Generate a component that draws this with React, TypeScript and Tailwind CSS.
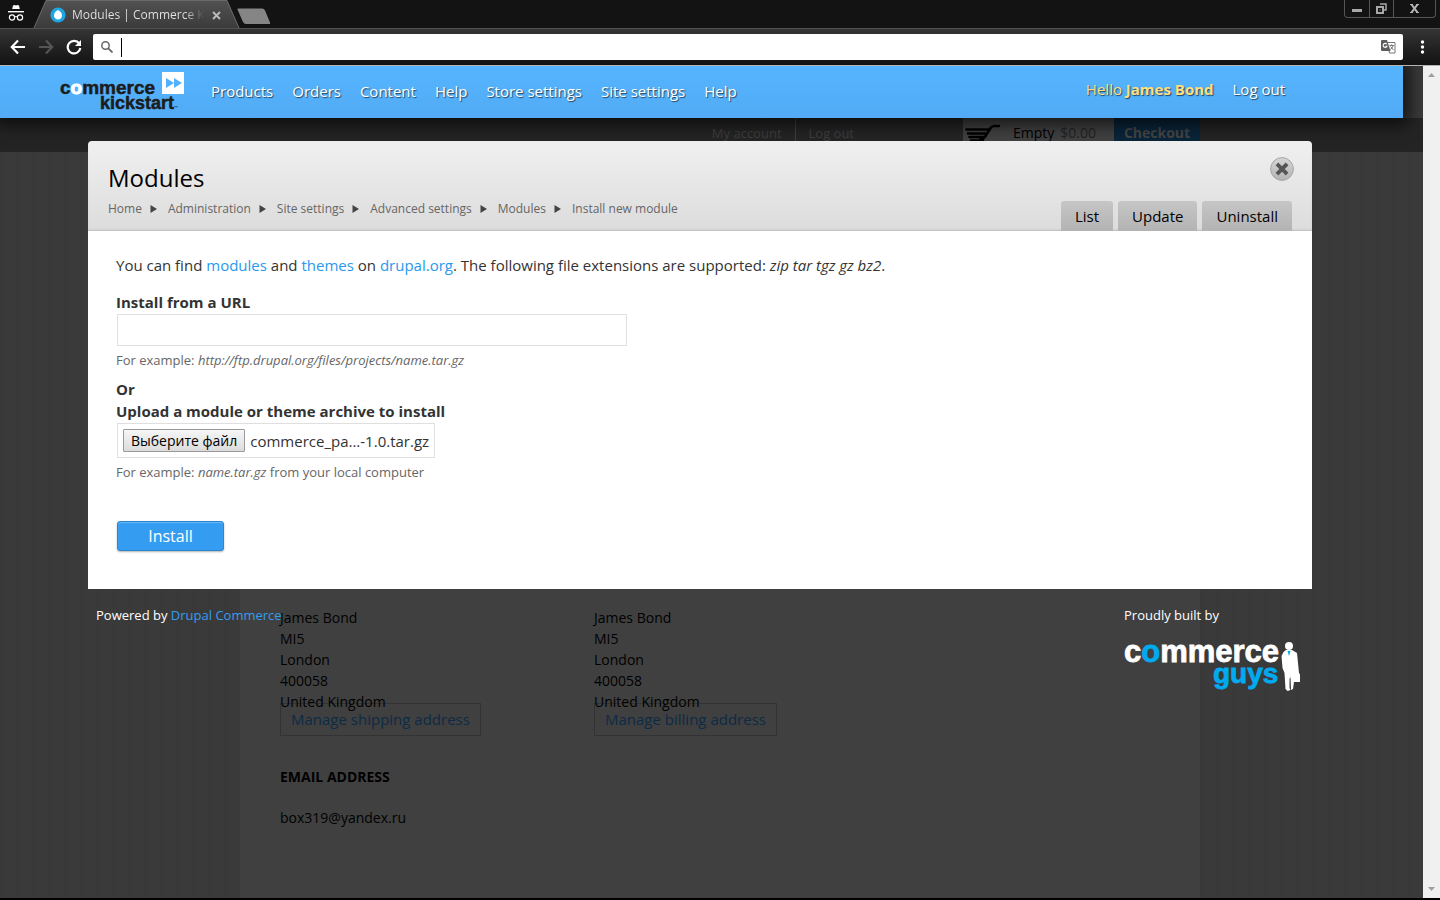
import { useRef } from 'react'

interface LinkItem {
  label: string
  href: string
}

const adminLinks: LinkItem[] = [
  { label: 'Products', href: '#products' },
  { label: 'Orders', href: '#orders' },
  { label: 'Content', href: '#content' },
  { label: 'Help', href: '#help' },
  { label: 'Store settings', href: '#store-settings' },
  { label: 'Site settings', href: '#site-settings' },
  { label: 'Help', href: '#support' },
]

const breadcrumbs: LinkItem[] = [
  { label: 'Home', href: '#home' },
  { label: 'Administration', href: '#admin' },
  { label: 'Site settings', href: '#admin-site' },
  { label: 'Advanced settings', href: '#admin-advanced' },
  { label: 'Modules', href: '#admin-modules' },
  { label: 'Install new module', href: '#admin-install' },
]

const tabs: LinkItem[] = [
  { label: 'List', href: '#list' },
  { label: 'Update', href: '#update' },
  { label: 'Uninstall', href: '#uninstall' },
]

const address = ['James Bond', 'MI5', 'London', '400058', 'United Kingdom']

function TabStrip() {
  return (
    <div className="relative flex h-7 shrink-0 justify-between bg-[#131313]">
      <div className="flex">
        <svg className="ml-2 mt-1 h-[18px] w-4" viewBox="0 0 16 18" fill="none">
          <path d="M4.2 5 5 1.4 6.6 1l1.4.5L9.4 1l1.6.4.8 3.6z" fill="#fff" />
          <path d="M0 7h16v1.4H0z" fill="#fff" />
          <circle cx="4" cy="13.5" r="2.6" stroke="#fff" strokeWidth="1.2" />
          <circle cx="12" cy="13.5" r="2.6" stroke="#fff" strokeWidth="1.2" />
          <path d="M6.5 13q1.5-1 3 0" stroke="#fff" />
        </svg>
        <div className="relative ml-2 flex h-7 w-[208px] items-center">
          <svg
            className="absolute inset-0 h-full w-full"
            viewBox="0 0 208 28"
            preserveAspectRatio="none"
          >
            <defs>
              <linearGradient id="tab" x1="0" y1="0" x2="0" y2="1">
                <stop offset="0" stopColor="#525252" />
                <stop offset="1" stopColor="#3b3b3b" />
              </linearGradient>
            </defs>
            <path d="M2 28 14 0h181l12 28z" fill="url(#tab)" />
            <path d="M2 28 14 .5h181L207 28" fill="none" stroke="#6a6a6a" />
          </svg>
          <svg className="relative ml-[18px] mt-[2px] h-4 w-4" viewBox="0 0 16 16">
            <circle cx="8" cy="8" r="7.6" fill="#1fa5e0" />
            <path
              d="M8 3c2.400 1.200 4 3 4 5.400A4 4 0 0 1 8 12.600 4 4 0 0 1 4 8.400C4 6 5.600 4.200 8 3z"
              fill="#fff"
            />
          </svg>
          <span className="relative ml-[6px] mt-[2px] w-[132px] overflow-hidden whitespace-nowrap bg-linear-to-r from-[#e6e6e6] from-85% to-transparent bg-clip-text text-xs text-transparent">
            Modules | Commerce Kickstart
          </span>
          <button
            type="button"
            aria-label="Close tab"
            className="relative ml-2 mt-[2px]"
          >
            <svg className="h-[9px] w-[9px]" viewBox="0 0 9 9">
              <path d="m1 1 7 7M8 1 1 8" stroke="#b9b9b9" strokeWidth="2" />
            </svg>
          </button>
        </div>
        <button type="button" aria-label="New tab" className="-ml-1 flex h-7 items-center pt-1">
          <svg className="h-[17px] w-[35px]" viewBox="0 0 35 17">
            <path
              d="M1.500 1.500Q1 .5 2.500.5H26q2 0 3 2l5 12q.5 1.500-1 1.500H10q-2 0-3-2z"
              fill="#858585"
            />
          </svg>
        </button>
      </div>
      <div className="mr-1 flex h-[18px] rounded-b border border-t-0 border-[#555]">
        <button
          type="button"
          aria-label="Minimize"
          className="flex w-6 items-center justify-center"
        >
          <span className="mt-1 h-[3px] w-[10px] bg-[#a8a8a8]" />
        </button>
        <button
          type="button"
          aria-label="Restore"
          className="flex w-[25px] items-center justify-center border-x border-[#555]"
        >
          <svg className="h-[11px] w-[11px]" viewBox="0 0 11 11" fill="none">
            <path d="M4 1h6v6H8" stroke="#a8a8a8" strokeWidth="1.500" />
            <path d="M1 4h6v6H1z" stroke="#a8a8a8" strokeWidth="2" />
            <path d="M3.500 6.500h1v1h-1z" fill="#a8a8a8" />
          </svg>
        </button>
        <button
          type="button"
          aria-label="Close"
          className="flex w-[41px] items-center justify-center"
        >
          <svg className="h-[9px] w-[9px]" viewBox="0 0 9 9">
            <path
              d="M0 .5h3M6 .5h3M0 8.500h3M6 8.500h3"
              stroke="#b5b5b5"
            />
            <path d="m1.500.5 6 8m0-8-6 8" stroke="#b5b5b5" strokeWidth="2" />
          </svg>
        </button>
      </div>
    </div>
  )
}

function Toolbar() {
  return (
    <div className="flex h-[38px] shrink-0 items-center border-b border-t border-b-[#b5b5b5] border-t-[#505050] bg-linear-to-b from-[#353535] to-[#121212]">
      <button type="button" aria-label="Back" className="ml-[10px]">
        <svg className="h-4 w-4" viewBox="0 0 16 16" fill="none">
          <path d="M15 8H2M8 1.500 1.800 8 8 14.500" stroke="#fff" strokeWidth="2.200" />
        </svg>
      </button>
      <button type="button" aria-label="Forward" className="ml-3">
        <svg className="h-4 w-4" viewBox="0 0 16 16" fill="none">
          <path d="M1 8h13M8 1.500 14.200 8 8 14.500" stroke="#555" strokeWidth="2.200" />
        </svg>
      </button>
      <button type="button" aria-label="Reload" className="ml-3">
        <svg className="h-4 w-4" viewBox="0 0 16 16" fill="none">
          <path
            d="M13.200 4.500A6.300 6.300 0 1 0 14.300 9"
            stroke="#fff"
            strokeWidth="2.200"
          />
          <path d="M15 1v6H9z" fill="#fff" />
        </svg>
      </button>
      <div className="ml-[11px] flex h-[26px] flex-1 items-center rounded-xs bg-white">
        <svg className="ml-2 h-3 w-3" viewBox="0 0 12 12" fill="none">
          <circle cx="4.500" cy="4.500" r="3.700" stroke="#666" strokeWidth="1.500" />
          <path d="m7.300 7.300 4.200 4.200" stroke="#666" strokeWidth="1.800" />
        </svg>
        <span className="ml-2 h-[19px] w-px bg-black" />
        <input
          type="text"
          aria-label="Address and search bar"
          className="h-full min-w-0 flex-1 px-1 text-sm outline-none"
        />
        <button type="button" aria-label="Translate this page" className="mr-[7px]">
          <svg className="h-[14px] w-[15px]" viewBox="0 0 15 14" fill="none">
            <path d="M6 2.500h8v10.500H8.500z" fill="#fff" stroke="#777" />
            <path d="M0 1q0-1 1-1h5l3.500 11H1q-1 0-1-1z" fill="#5d5d5d" />
            <path d="M5.800 4.200A2 2 0 1 0 6 6.200H4.500" stroke="#fff" strokeWidth="1.100" />
            <path d="M8.500 5.500h4.500M10.700 4.300v1.200M12.200 5.500q-.5 2.500-3 4M9.500 6.500l3 3.500" stroke="#777" />
          </svg>
        </button>
      </div>
      <button type="button" aria-label="Menu" className="ml-[17px] mr-[15px]">
        <svg className="h-[14px] w-[5px]" viewBox="0 0 5 14" fill="#fff">
          <circle cx="2.500" cy="2" r="1.700" />
          <circle cx="2.500" cy="7" r="1.700" />
          <circle cx="2.500" cy="12" r="1.700" />
        </svg>
      </button>
    </div>
  )
}

function KickstartLogo() {
  return (
    <svg
      className="h-10 w-[126px] text-shadow-none"
      viewBox="0 0 126 40"
      fontFamily="'Liberation Sans', sans-serif"
      fontWeight="700"
      fill="#1c1c1c"
      stroke="#1c1c1c"
      strokeWidth=".5"
    >
      <text x="0" y="23" fontSize="19">
        c
        <tspan fill="#fff" stroke="#fff" strokeWidth="1">
          o
        </tspan>
        mmerce
      </text>
      <text x="40" y="38" fontSize="18">
        kickstart
      </text>
      <text x="114" y="38" fontSize="4" stroke="none">
        ™
      </text>
      <path d="M102 1h22v22h-22z" fill="#fff" stroke="none" />
      <path d="m106 7 8 5-8 5zM114 7l8 5-8 5z" fill="#55b1fd" stroke="none" />
    </svg>
  )
}

function AdminBar() {
  return (
    <div className="absolute left-0 right-5 top-0 flex h-[52px] items-center bg-linear-to-b from-[#55b4ff] to-[#52abf4] pb-[2px] pl-[60px] text-[15px] text-white shadow-[0_0_16px_6px_rgba(0,0,0,0.7)] text-shadow-[1px_1px_1px_rgba(0,0,0,0.6)]">
      <a href="#kickstart" aria-label="Commerce Kickstart">
        <KickstartLogo />
      </a>
      <nav className="ml-[25px] flex gap-[19px]">
        {adminLinks.map((link) => (
          <a key={link.href} href={link.href}>
            {link.label}
          </a>
        ))}
      </nav>
      <div className="ml-auto mr-[118px] flex gap-[19px] pb-1">
        <a href="#user" className="text-[#ffdf80]">
          Hello <strong>James Bond</strong>
        </a>
        <a href="#logout">Log out</a>
      </div>
    </div>
  )
}

function StoreAddress({ action }: { action: string }) {
  return (
    <div className="w-[314px]">
      {address.map((line) => (
        <p key={line}>{line}</p>
      ))}
      <a
        href="#address"
        className="-mt-[9px] block w-fit border border-[#333] px-[10px] py-[5px] text-[15px] text-[#0d2b45]"
      >
        {action}
      </a>
    </div>
  )
}

// storefront, dimmed while the admin overlay is open
function Storefront() {
  return (
    <div className="flex h-full flex-col bg-[#3a3a3a] bg-[repeating-linear-gradient(90deg,#393939_0_5px,#3a3a3a_5px_16px)] pt-[52px]">
      <div className="h-[34px] shrink-0 bg-[#242424] pl-60 text-sm">
        <div className="flex w-[960px] justify-end text-[#3f3f3f]">
          <a href="#account" className="pr-[13px] pt-[5px] text-[13px] leading-5">
            My account
          </a>
          <a
            href="#store-logout"
            className="border-l border-[#3f3f3f] pl-[13px] pt-[5px] text-[13px] leading-5"
          >
            Log out
          </a>
          <div className="ml-[109px] flex h-[34px] w-[151px] bg-[#404040] pt-[5px]">
            <svg className="ml-[2px] mt-[1px] h-5 w-9" viewBox="0 0 36 20" fill="none">
              <path
                d="M34 2h-5q-2 0-3.500 2l-5 8q-2 3-5 3M1.500 5.500H25M3 9.500h19M4.500 13h15M6 16.500h12"
                stroke="#000"
                strokeWidth="2.600"
                strokeLinecap="round"
              />
            </svg>
            <span className="ml-3 text-black">Empty</span>
            <span className="ml-[6px] text-[#232323]">$0.00</span>
          </div>
          <a
            href="#checkout"
            className="w-[86px] bg-[#0a2439] pt-[5px] text-center font-bold text-[#454545]"
          >
            Checkout
          </a>
        </div>
      </div>
      <div className="min-h-0 flex-1 pl-60">
        <div className="h-full w-[960px] bg-[#404040] pl-10 pt-[455px] text-sm leading-[21px] text-black">
          <div className="flex">
            <StoreAddress action="Manage shipping address" />
            <StoreAddress action="Manage billing address" />
          </div>
          <h2 className="mt-[30px] text-sm leading-[21px] font-bold">EMAIL ADDRESS</h2>
          <p className="mt-5">box319@yandex.ru</p>
        </div>
      </div>
    </div>
  )
}

function InstallForm() {
  const fileRef = useRef<HTMLInputElement>(null)

  return (
    <form className="text-[15px] leading-[22px]" onSubmit={(e) => e.preventDefault()}>
      <label htmlFor="project-url" className="block font-bold">
        Install from a URL
      </label>
      <input
        id="project-url"
        type="text"
        className="ml-px mt-px block h-8 w-[510px] border border-[#dfdfdf] px-2 outline-none"
      />
      <p className="mt-[3px] text-[13px] text-[#666]">
        For example: <em>http://ftp.drupal.org/files/projects/name.tar.gz</em>
      </p>
      <p className="mt-[7px] font-bold">Or</p>
      <label htmlFor="project-upload" className="block font-bold">
        Upload a module or theme archive to install
      </label>
      <div className="ml-px mt-px flex h-[35px] w-fit items-center gap-[5px] border border-[#dfdfdf] px-[5px]">
        <input ref={fileRef} id="project-upload" type="file" className="hidden" />
        <button
          type="button"
          onClick={() => fileRef.current?.click()}
          className="h-[23px] rounded-[1px] border border-[#999] bg-linear-to-b from-[#f6f6f6] to-[#dcdcdc] px-[7px] text-sm leading-5 text-black"
        >
          Выберите файл
        </button>
        <span>commerce_pa...-1.0.tar.gz</span>
      </div>
      <p className="mt-[3px] text-[13px] text-[#666]">
        For example: <em>name.tar.gz</em> from your local computer
      </p>
      <button
        type="submit"
        className="ml-px mt-[38px] block h-[30px] w-[107px] rounded-[3px] border border-[#2b86d0] bg-[#349df1] text-base leading-7 text-white shadow-[inset_0_1px_1px_#6bbaf7,0_1px_2px_rgba(0,0,0,0.3)]"
      >
        Install
      </button>
    </form>
  )
}

function GuysLogo() {
  return (
    <svg
      className="h-[54px] w-[176px]"
      viewBox="0 0 176 54"
      fontFamily="'Liberation Sans', sans-serif"
      fontWeight="700"
      fill="#fff"
    >
      <text x="0" y="24" fontSize="31" stroke="#fff" strokeWidth=".8">
        c
        <tspan fill="#00aaef" stroke="#00aaef">
          o
        </tspan>
        mmerce
      </text>
      <text x="89" y="45" fontSize="28" fill="#00aaef" stroke="#00aaef" strokeWidth=".8">
        guys
      </text>
      <circle cx="165" cy="8" r="4" />
      <path d="M162 12h6l5 3 1.500 15 .5 5 1.500 2-.5 7h-6l-1 7-2 1-.5-13-1 2v9l1 2-3 1-2-2-1-16-2-5-1-12 2-4z" />
      <path d="m163.500 13 1.500 5 1.500-5z" fill="#00aaef" />
    </svg>
  )
}

function Overlay() {
  return (
    <div className="absolute inset-x-0 top-[75px] ml-[88px] mr-[111px]">
      <header className="h-[90px] rounded-t bg-linear-to-b from-[#f0f0f0] to-[#dcdcdc] pl-5 pr-[18px] shadow-[inset_0_-2px_2px_-1px_#bbb]">
        <div className="flex items-start justify-between pt-4">
          <h1 className="mt-1 text-2xl leading-[34px] text-black">Modules</h1>
          <button type="button" aria-label="Close overlay">
            <svg className="block h-6 w-6" viewBox="0 0 24 24">
              <defs>
                <linearGradient id="close" x1="0" y1="0" x2="0" y2="1">
                  <stop offset="0" stopColor="#d6d6d6" />
                  <stop offset="1" stopColor="#b4b4b4" />
                </linearGradient>
              </defs>
              <circle cx="12" cy="12" r="11.400" fill="url(#close)" stroke="#a5a5a5" />
              <path
                d="m8.300 8.300 7.400 7.400m0-7.400-7.400 7.400"
                stroke="#555"
                strokeWidth="3.800"
                strokeLinecap="square"
              />
            </svg>
          </button>
        </div>
        <div className="flex h-9 justify-between">
          <nav aria-label="Breadcrumb" className="flex items-start text-xs leading-7 text-[#666]">
            {breadcrumbs.map((crumb, index) => (
              <div key={crumb.href} className="flex items-center">
                {index > 0 && (
                  <svg className="ml-2 mr-[11px] h-2 w-[7px]" viewBox="0 0 7 8">
                    <path d="m.5 0 6.500 4-6.500 4z" fill="#444" />
                  </svg>
                )}
                <a href={crumb.href}>{crumb.label}</a>
              </div>
            ))}
          </nav>
          <div className="mr-[2px] mt-[6px] flex h-[30px] gap-[5px] text-[15px] leading-[30px] text-black">
            {tabs.map((tab) => (
              <a
                key={tab.href}
                href={tab.href}
                className="rounded-t-[3px] bg-linear-to-b from-[#c6c6c6] to-[#b3b3b3] px-[14px]"
              >
                {tab.label}
              </a>
            ))}
          </div>
        </div>
      </header>
      <main className="bg-white px-7 pb-[38px] pt-[23px] text-[#333]">
        <p className="mb-[15px] text-[15px] leading-[22px]">
          You can find{' '}
          <a href="#modules" className="text-[#2998ee]">
            modules
          </a>{' '}
          and{' '}
          <a href="#themes" className="text-[#2998ee]">
            themes
          </a>{' '}
          on{' '}
          <a href="#drupal" className="text-[#2998ee]">
            drupal.org
          </a>
          . The following file extensions are supported: <em>zip tar tgz gz bz2</em>.
        </p>
        <InstallForm />
      </main>
      <footer className="flex justify-between pl-2 pr-3 pt-[15px] text-[13px] leading-[22px] text-white">
        <p>
          Powered by{' '}
          <a href="#commerce" className="text-[#349df1]">
            Drupal Commerce
          </a>
        </p>
        <div>
          <p>Proudly built by</p>
          <a href="#guys" aria-label="Commerce Guys" className="mt-3 block">
            <GuysLogo />
          </a>
        </div>
      </footer>
    </div>
  )
}

function Scrollbar() {
  return (
    <div className="flex w-[17px] shrink-0 flex-col items-center justify-between bg-[#f0f0f0] py-[7px]">
      <svg className="h-1 w-[7px]" viewBox="0 0 7 4" fill="#a0a0a0">
        <path d="m3.500 0 3.500 4H0z" />
      </svg>
      <svg className="h-1 w-[7px]" viewBox="0 0 7 4" fill="#a0a0a0">
        <path d="M0 0h7L3.500 4z" />
      </svg>
    </div>
  )
}

export default function App() {
  return (
    <div className="flex h-screen flex-col overflow-hidden bg-black pb-[2px] font-['Open_Sans','Noto_Sans',sans-serif]">
      <TabStrip />
      <Toolbar />
      <div className="flex min-h-0 flex-1">
        <div className="relative min-w-0 flex-1 overflow-hidden">
          <Storefront />
          <Overlay />
          <AdminBar />
        </div>
        <Scrollbar />
      </div>
    </div>
  )
}
